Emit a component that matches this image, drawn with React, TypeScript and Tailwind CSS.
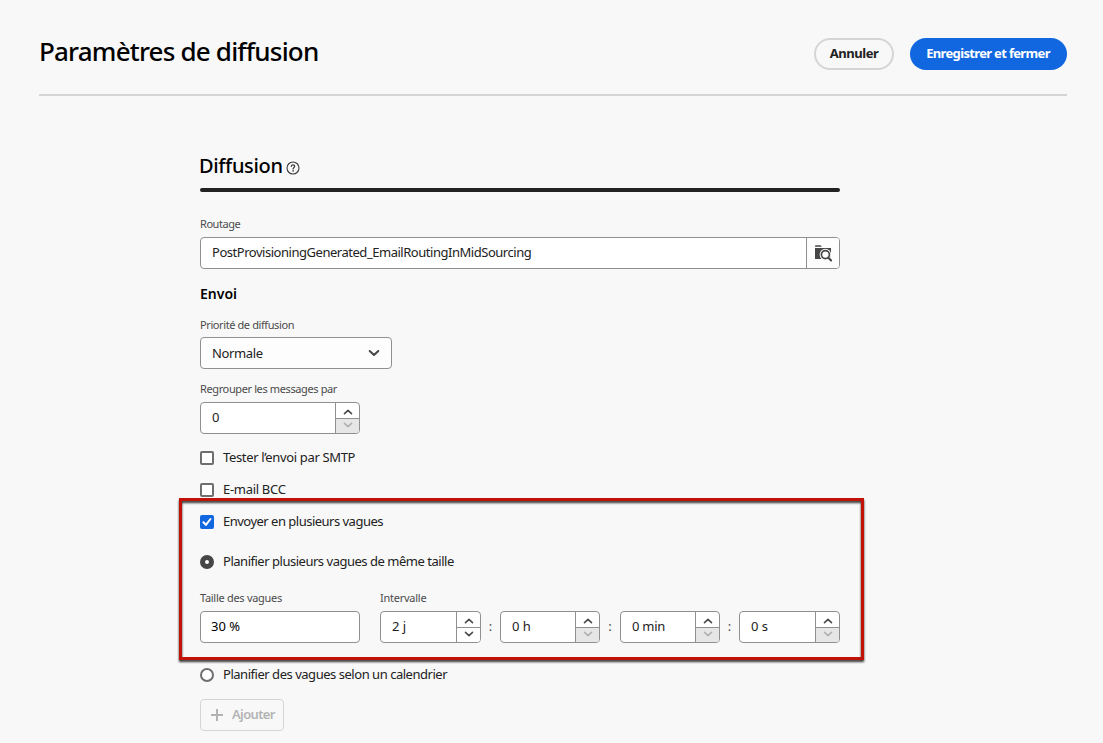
import React, { useState } from "react";
import clsx from "clsx";

function Chevron({ up = false, className }: { up?: boolean; className?: string }) {
  return (
    <svg viewBox="0 0 10 6" className={clsx("h-[6px] w-[10px]", className)} fill="none" stroke="currentColor" strokeLinecap="round" strokeLinejoin="round">
      <path d={up ? "M1.5 4.7 5 1.4 8.5 4.7" : "M1.5 1.3 5 4.6 8.5 1.3"} strokeWidth="1.6" />
    </svg>
  );
}

function Label({ children, className }: { children: React.ReactNode; className?: string }) {
  return <div className={clsx("h-4 text-[11px] leading-4 whitespace-nowrap text-[#4b4b4b]", className)}>{children}</div>;
}

function Stepper({ value, width, stepWidth = "w-6", textClass, downEnabled = false }: {
  value: string;
  width: string;
  stepWidth?: string;
  textClass?: string;
  downEnabled?: boolean;
}) {
  return (
    <div className={clsx("flex h-8 shrink-0 overflow-hidden rounded-[4px] border border-[#909090] bg-white", width)}>
      <div className={clsx("flex grow items-center pb-[2px] pl-[11px] text-[13px] leading-4 whitespace-pre text-[#222]", textClass)}>{value}</div>
      <div className={clsx("flex shrink-0 flex-col border-l border-[#909090]", stepWidth)}>
        <button className="flex h-[15px] items-center justify-center pt-[2px] text-[#4b4b4b]">
          <Chevron up />
        </button>
        <button
          className={clsx(
            "flex grow items-center justify-center border-t border-[#909090] pb-[2px]",
            downEnabled ? "bg-white text-[#4b4b4b]" : "bg-[#e6e6e6] text-[#b1b1b1]",
          )}
        >
          <Chevron />
        </button>
      </div>
    </div>
  );
}

function CheckRow({ label, initial = false, className, textClass }: {
  label: string;
  initial?: boolean;
  className?: string;
  textClass?: string;
}) {
  const [on, setOn] = useState(initial);
  return (
    <button role="checkbox" aria-checked={on} onClick={() => setOn(!on)} className={clsx("flex h-4 items-center", className)}>
      <span className={clsx("flex size-[14px] items-center justify-center rounded-[2px]", on ? "bg-[#1167e0] text-white" : "border-2 border-[#6e6e6e] bg-white")}>
        {on && (
          <svg viewBox="0 0 14 14" className="size-[14px]" fill="none" stroke="currentColor" strokeWidth="2" strokeLinecap="round" strokeLinejoin="round">
            <path d="M3.4 7.2 5.9 9.9 10.5 4" />
          </svg>
        )}
      </span>
      <span className={clsx("ml-[9px] pb-[2px] text-[13px] leading-4 whitespace-nowrap text-[#222]", textClass)}>{label}</span>
    </button>
  );
}

function RadioRow({ label, on, onSelect, className, textClass }: {
  label: string;
  on: boolean;
  onSelect: () => void;
  className?: string;
  textClass?: string;
}) {
  return (
    <button role="radio" aria-checked={on} onClick={onSelect} className={clsx("flex h-4 items-center", className)}>
      <span className={clsx("size-[14px] rounded-full", on ? "border-[5px] border-[#464646] bg-white" : "border-2 border-[#6e6e6e] bg-white")} />
      <span className={clsx("ml-[9px] pb-[2px] text-[13px] leading-4 whitespace-nowrap text-[#222]", textClass)}>{label}</span>
    </button>
  );
}

function Colon({ className }: { className?: string }) {
  return <div className={clsx("shrink-0 text-center text-[13px] leading-[31px] text-[#4b4b4b]", className)}>:</div>;
}

export default function App() {
  const [mode, setMode] = useState<"same" | "calendar">("same");
  return (
    <div className="relative h-[743px] w-[1103px] overflow-hidden bg-[#f8f8f8] font-['Noto_Sans','Open_Sans',sans-serif]">
      <header className="mr-9 ml-[39px] flex h-24 justify-between border-b-2 border-[#d5d5d5] pt-[38px]">
        <h1 className="h-7 text-[26px] leading-[26px] font-medium tracking-[-0.81px] text-black">Paramètres de diffusion</h1>
        <div className="flex gap-4">
          <button className="h-8 w-20 rounded-full border-2 border-[#d5d5d5] pb-[2px] text-[13px] leading-4 font-bold tracking-[-0.45px] whitespace-nowrap text-[#222]">
            Annuler
          </button>
          <button className="h-8 w-[157px] rounded-full bg-[#1167e0] pr-[17px] pb-[2px] pl-4 text-[13px] leading-4 font-bold tracking-[-0.66px] whitespace-nowrap text-white">
            Enregistrer et fermer
          </button>
        </div>
      </header>

      <main className="ml-[200px] flex w-[640px] flex-col items-start pt-[54px]">
        <div className="flex h-8 w-full items-center">
          <h2 className="-ml-px text-[20px] leading-8 font-medium tracking-[-0.35px] text-black">Diffusion</h2>
          <svg viewBox="0 0 14 14" className="mt-[4px] ml-[3px] size-[14px]" fill="none" stroke="#3a3a3a" strokeLinecap="round">
            <circle cx="7" cy="7" r="6" strokeWidth="1.1" />
            <path d="M5.3 5.3C5.5 4.3 6.2 3.9 7 3.9c1 0 1.7.6 1.7 1.4C8.7 6.4 7.1 6.6 7.1 8" strokeWidth="1.2" />
            <circle cx="7.1" cy="9.9" r=".8" fill="#3a3a3a" stroke="none" />
          </svg>
        </div>
        <div className="mt-[6px] h-1 w-full rounded-full bg-[#222]" />

        <Label className="mt-6 tracking-[-0.45px]">Routage</Label>
        <div className="mt-[5px] flex h-8 w-full overflow-hidden rounded-[4px] border border-[#909090] bg-white">
          <div className="grow pl-[11px] text-[13px] leading-[29px] tracking-[-0.47px] text-[#222]">
            PostProvisioningGenerated_EmailRoutingInMidSourcing
          </div>
          <button className="flex w-[33px] items-center justify-center border-l border-[#909090] bg-[#fdfdfd]">
            <svg viewBox="0 0 18 18" className="size-[18px]" fill="none">
              <path d="M1 2c0-.5.3-.8.8-.8h4.4c.4 0 .7.2.9.5l.8 1.1H1z" fill="#464646" />
              <path d="M1 4h16v11H1z" fill="#464646" />
              <circle cx="11.4" cy="10.6" r="5.8" fill="#fdfdfd" />
              <path d="M14 13.4 17 16.4" stroke="#fdfdfd" strokeWidth="4" />
              <circle cx="11.4" cy="10.6" r="4" fill="#fdfdfd" stroke="#464646" strokeWidth="1.7" />
              <path d="m14.4 13.7 2.7 2.8" stroke="#464646" strokeWidth="2.1" strokeLinecap="round" />
            </svg>
          </button>
        </div>

        <h3 className="mt-[15px] h-5 text-[14px] leading-5 font-semibold text-black">Envoi</h3>

        <Label className="mt-[13px] tracking-[-0.4px]">Priorité de diffusion</Label>
        <button className="mt-1 flex h-8 w-48 items-center justify-between rounded-[4px] border border-[#909090] bg-[#fdfdfd] pr-[11px] pl-[11px] text-[13px] leading-4 tracking-[-0.38px] text-[#222]">
          <span>Normale</span>
          <svg viewBox="0 0 12 8" className="h-2 w-3" fill="none" stroke="#464646" strokeWidth="2" strokeLinecap="round" strokeLinejoin="round">
            <path d="M1.7 2 6 6 10.3 2" />
          </svg>
        </button>

        <Label className="mt-3 tracking-[-0.38px]">Regrouper les messages par</Label>
        <div className="mt-[5px]">
          <Stepper value="0" width="w-40" />
        </div>

        <CheckRow label="Tester l’envoi par SMTP" className="mt-4" textClass="tracking-[-0.35px]" />
        <CheckRow label="E-mail BCC" className="mt-4" textClass="tracking-[-0.3px]" />
        <CheckRow label="Envoyer en plusieurs vagues" initial className="mt-4" textClass="tracking-[-0.51px]" />

        <RadioRow
          label="Planifier plusieurs vagues de même taille"
          on={mode === "same"}
          onSelect={() => setMode("same")}
          className="mt-6"
          textClass="tracking-[-0.48px]"
        />

        <div className="mt-5 flex w-full gap-5">
          <div className="w-40 shrink-0">
            <Label className="tracking-[-0.29px]">Taille des vagues</Label>
            <div className="mt-[5px] h-8 rounded-[4px] border border-[#909090] bg-white pl-[10px] text-[13px] leading-[29px] text-black">30 %</div>
          </div>
          <div className="w-[460px] shrink-0">
            <Label className="tracking-[-0.25px]">Intervalle</Label>
            <div className="mt-[5px] flex">
              <Stepper value="2 j" width="w-[101px]" downEnabled />
              <Colon className="w-[19px]" />
              <Stepper value="0 h" width="w-[100px]" />
              <Colon className="w-5" />
              <Stepper value="0 min" width="w-[100px]" textClass="tracking-[-0.25px]" />
              <Colon className="w-[19px]" />
              <Stepper value="0 s" width="w-[101px]" />
            </div>
          </div>
        </div>

        <RadioRow
          label="Planifier des vagues selon un calendrier"
          on={mode === "calendar"}
          onSelect={() => setMode("calendar")}
          className="mt-6"
          textClass="tracking-[-0.47px]"
        />

        <button disabled className="mt-4 flex h-8 w-[84px] items-center rounded-[4px] border border-[#d5d5d5] pl-[10px] text-[13px] leading-4 font-semibold tracking-[-0.64px] text-[#b3b3b3]">
          <svg viewBox="0 0 12 12" className="size-3 shrink-0" stroke="#b3b3b3" strokeWidth="2">
            <path d="M6 0v12M0 6h12" />
          </svg>
          <span className="ml-[9px] pb-[2px]">Ajouter</span>
        </button>
      </main>

      <div className="pointer-events-none absolute top-[498px] left-[179px] h-[162px] w-[685px] border-3 border-[#c01207] drop-shadow-[0_2px_1px_rgba(0,0,0,0.8)]" />
    </div>
  );
}
